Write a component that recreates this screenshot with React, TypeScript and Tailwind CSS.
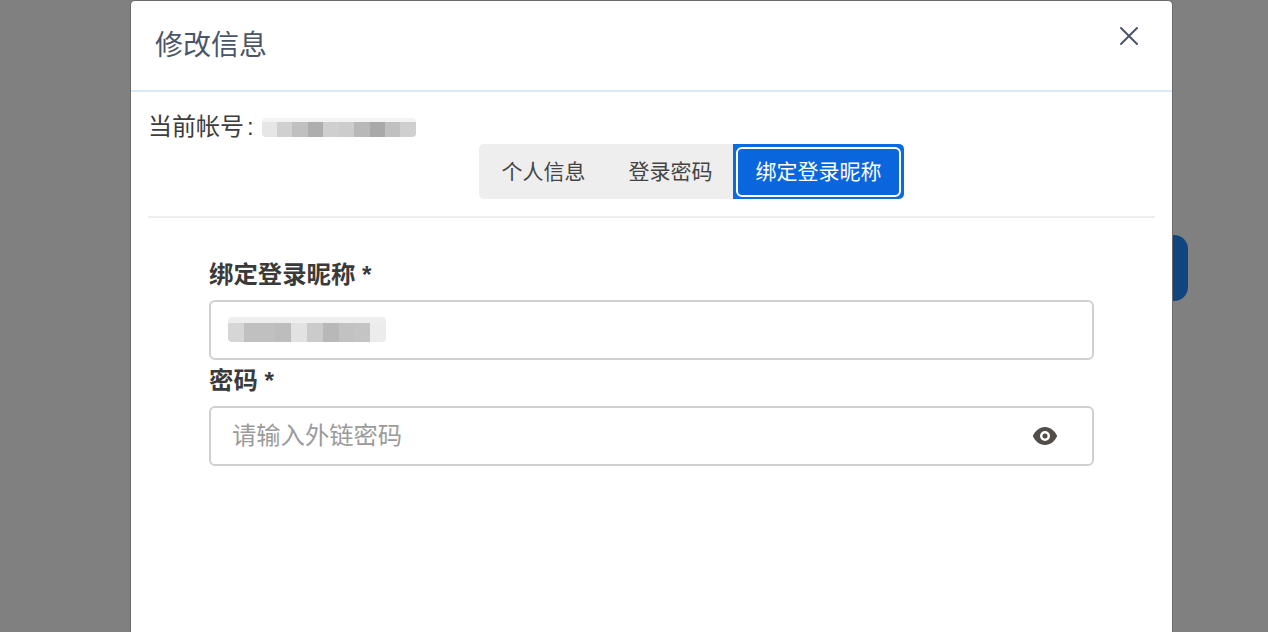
const cjk = "font-['Liberation_Sans','Noto_Sans_CJK_SC',sans-serif]";

function Mosaic({ cells, band, className, bandClass }: { cells: string[]; band: string; className: string; bandClass: string }) {
  return (
    <div className={`flex flex-col overflow-hidden rounded-[4px] blur-[0.6px] ${className}`}>
      <div className={`shrink-0 ${bandClass}`} style={{ backgroundColor: band }} />
      <div className="flex min-h-0 flex-1">
        {cells.map((c, i) => (
          <div key={i} className="h-full flex-1" style={{ backgroundColor: c }} />
        ))}
      </div>
    </div>
  );
}

export default function App() {
  return (
    <div className={`relative h-[632px] w-[1268px] overflow-hidden bg-[#808080] ${cjk}`}>
      <div className="absolute left-[1160px] top-[235px] h-[66px] w-[28px] rounded-[14px] bg-[#10457e]" />
      <div className="relative ml-[130px] flex h-[640px] w-[1043px] flex-col rounded-t-[5px] border-x border-t border-[#6a6a6a] bg-white">
        <header className="flex h-[91px] shrink-0 items-start justify-between border-b-2 border-[#dbe8fb] pl-[24px] pr-[33px]">
          <h1 className="mt-[25px] text-[28px] leading-[40px] text-[#4a5568]">修改信息</h1>
          <svg className="mt-[25px]" width="20" height="20" viewBox="0 0 20 20" fill="none" stroke="#4a5568" strokeWidth="2" strokeLinecap="round">
            <path d="M2 2 18 18M18 2 2 18" />
          </svg>
        </header>
        <div className="px-[17px]">
          <div className="mt-[17px] flex h-[35px] items-center text-[24px] leading-[36px] text-[#3d3d3d]">
            <span>当前帐号</span>
            <span className="ml-[3px]">:</span>
            <Mosaic
              className="ml-[8px] mt-[1px] h-[19px] w-[154px]"
              bandClass="h-[4px]"
              band="#f3f3f3"
              cells={["#e6e6e6", "#d0d0d0", "#c0c0c0", "#aeaeae", "#cfcfcf", "#cccccc", "#b8b8b8", "#a9a9a9", "#c0c0c0", "#cfcfcf"]}
            />
          </div>
          <div className="flex justify-end pr-[251px]">
            <div className="flex h-[55px] items-stretch rounded-[5px] bg-[#eeeeee] text-[21px] text-[#444444]">
              <div className="flex w-[127px] items-center justify-center pl-[2px]">个人信息</div>
              <div className="flex w-[127px] items-center justify-center pl-[2px]">登录密码</div>
              <div className="flex w-[171px] items-center justify-center rounded-r-[5px] bg-[#0a6ae0] text-white">
                <div className="flex h-[50px] w-[165px] items-center justify-center rounded-[6px] border-2 border-white bg-[#0a66dc]">绑定登录昵称</div>
              </div>
            </div>
          </div>
          <div className="mt-[17px] h-[2px] bg-[#eeeeee]" />
          <form className="mx-[61px] mt-[39px] w-[885px] text-[#3a3a3a]">
            <label className="block h-[43px] text-[24.4px] font-bold leading-[36px]">绑定登录昵称 *</label>
            <div className="flex h-[60px] items-center rounded-[6px] border-2 border-[#d0d0d0] pl-[17px]">
              <Mosaic
                className="mb-[2px] h-[25px] w-[158px]"
                bandClass="h-[6px]"
                band="#eeeeee"
                cells={["#d6d6d6", "#c0c0c0", "#c0c0c0", "#bdbdbd", "#e2e2e2", "#cbcbcb", "#b8b8b8", "#c2c2c2", "#c4c4c4", "#ececec"]}
              />
            </div>
            <label className="block h-[46px] text-[24.4px] font-bold leading-[42px]">密码 *</label>
            <div className="flex h-[60px] items-center justify-between rounded-[6px] border-2 border-[#d0d0d0] pl-[21px] pr-[34px]">
              <span className="pt-[1px] text-[24.3px] text-[#9b9b9b]">请输入外链密码</span>
              <svg className="mb-[1px]" width="26" height="20" viewBox="0 0 26 20">
                <path fillRule="evenodd" fill="#534d4a" d="M13 1C7.5 1 3 5 .8 10 3 15 7.5 19 13 19s10-4 12.2-9C23 5 18.500 1 13 1Zm0 4a5 5 0 1 1 0 10 5 5 0 0 1 0-10Zm0 2.500a2.500 2.500 0 1 0 0 5 2.500 2.500 0 0 0 0-5Z" />
              </svg>
            </div>
          </form>
        </div>
      </div>
    </div>
  );
}
